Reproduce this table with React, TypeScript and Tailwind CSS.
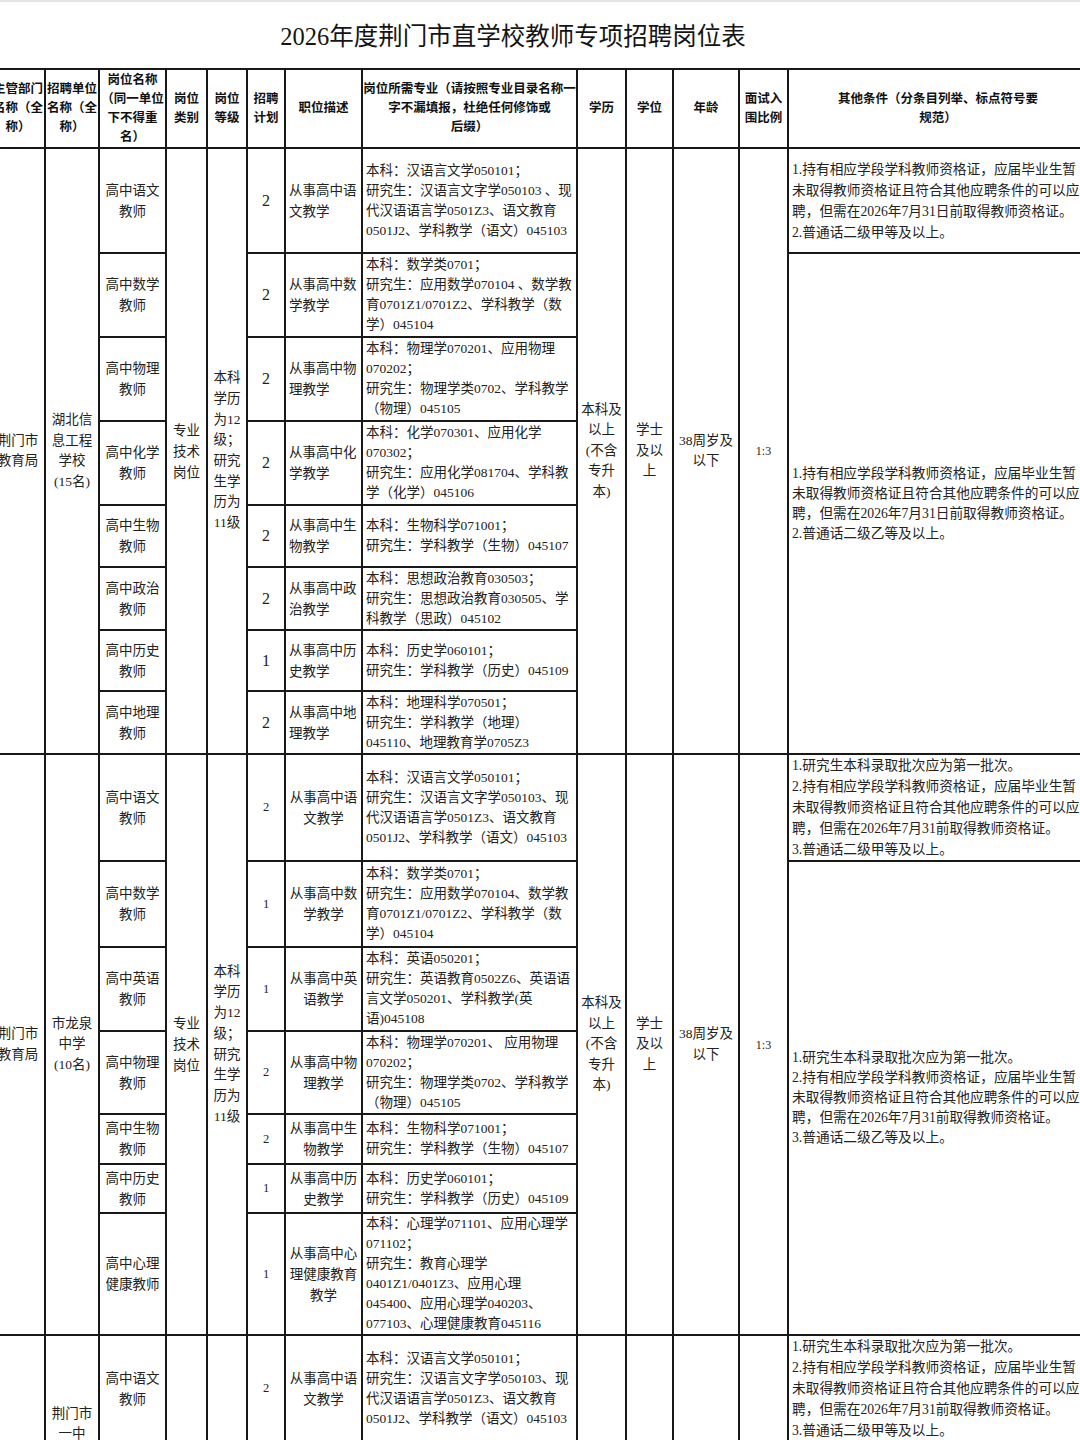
import type { ReactElement } from 'react';

type Row = {
  h: string;
  name: string[];
  plan: string;
  desc: string[];
  major: string[];
};

type Group = {
  dept: string[];
  unit: string[];
  kind: string[];
  grade: string[];
  edu: string[];
  degree: string[];
  age: string[];
  ratio: string;
  descCenter: boolean;
  planBig: boolean;
  otherFirst: string[];
  otherRest: string[];
  rows: Row[];
};

const OTHER_A = [
  '1.持有相应学段学科教师资格证，应届毕业生暂',
  '未取得教师资格证且符合其他应聘条件的可以应',
  '聘，但需在2026年7月31日前取得教师资格证。',
];

const OTHER_B = [
  '1.研究生本科录取批次应为第一批次。',
  '2.持有相应学段学科教师资格证，应届毕业生暂',
  '未取得教师资格证且符合其他应聘条件的可以应',
  '聘，但需在2026年7月31前取得教师资格证。',
];

const CHINESE = [
  '本科：汉语言文学050101；',
  '研究生：汉语言文字学050103 、现',
  '代汉语语言学0501Z3、语文教育',
  '0501J2、学科教学（语文）045103',
];

const GROUPS: Group[] = [
  {
    dept: ['荆门市', '教育局'],
    unit: ['湖北信', '息工程', '学校', '(15名)'],
    kind: ['专业', '技术', '岗位'],
    grade: ['本科', '学历', '为12', '级；', '研究', '生学', '历为', '11级'],
    edu: ['本科及', '以上', '(不含', '专升', '本)'],
    degree: ['学士', '及以', '上'],
    age: ['38周岁及', '以下'],
    ratio: '1:3',
    descCenter: false,
    planBig: true,
    otherFirst: [...OTHER_A, '2.普通话二级甲等及以上。'],
    otherRest: [...OTHER_A, '2.普通话二级乙等及以上。'],
    rows: [
      { h: 'h-[105px]', name: ['高中语文', '教师'], plan: '2', desc: ['从事高中语', '文教学'], major: CHINESE },
      {
        h: 'h-[84px]',
        name: ['高中数学', '教师'],
        plan: '2',
        desc: ['从事高中数', '学教学'],
        major: ['本科：数学类0701；', '研究生：应用数学070104 、数学教', '育0701Z1/0701Z2、学科教学（数', '学）045104'],
      },
      {
        h: 'h-[84px]',
        name: ['高中物理', '教师'],
        plan: '2',
        desc: ['从事高中物', '理教学'],
        major: ['本科：物理学070201、应用物理', '070202；', '研究生：物理学类0702、学科教学', '（物理）045105'],
      },
      {
        h: 'h-[84px]',
        name: ['高中化学', '教师'],
        plan: '2',
        desc: ['从事高中化', '学教学'],
        major: ['本科：化学070301、应用化学', '070302；', '研究生：应用化学081704、学科教', '学（化学）045106'],
      },
      {
        h: 'h-[62px]',
        name: ['高中生物', '教师'],
        plan: '2',
        desc: ['从事高中生', '物教学'],
        major: ['本科：生物科学071001；', '研究生：学科教学（生物）045107'],
      },
      {
        h: 'h-[63px]',
        name: ['高中政治', '教师'],
        plan: '2',
        desc: ['从事高中政', '治教学'],
        major: ['本科：思想政治教育030503；', '研究生：思想政治教育030505、学', '科教学（思政）045102'],
      },
      {
        h: 'h-[61px]',
        name: ['高中历史', '教师'],
        plan: '1',
        desc: ['从事高中历', '史教学'],
        major: ['本科：历史学060101；', '研究生：学科教学（历史）045109'],
      },
      {
        h: 'h-[63px]',
        name: ['高中地理', '教师'],
        plan: '2',
        desc: ['从事高中地', '理教学'],
        major: ['本科：地理科学070501；', '研究生：学科教学（地理）', '045110、地理教育学0705Z3'],
      },
    ],
  },
  {
    dept: ['荆门市', '教育局'],
    unit: ['市龙泉', '中学', '(10名)'],
    kind: ['专业', '技术', '岗位'],
    grade: ['本科', '学历', '为12', '级；', '研究', '生学', '历为', '11级'],
    edu: ['本科及', '以上', '(不含', '专升', '本)'],
    degree: ['学士', '及以', '上'],
    age: ['38周岁及', '以下'],
    ratio: '1:3',
    descCenter: true,
    planBig: false,
    otherFirst: [...OTHER_B, '3.普通话二级甲等及以上。'],
    otherRest: [...OTHER_B, '3.普通话二级乙等及以上。'],
    rows: [
      {
        h: 'h-[104px]',
        name: ['高中语文', '教师'],
        plan: '2',
        desc: ['从事高中语', '文教学'],
        major: ['本科：汉语言文学050101；', '研究生：汉语言文字学050103、现', '代汉语语言学0501Z3、语文教育', '0501J2、学科教学（语文）045103'],
      },
      {
        h: 'h-[86px]',
        name: ['高中数学', '教师'],
        plan: '1',
        desc: ['从事高中数', '学教学'],
        major: ['本科：数学类0701；', '研究生：应用数学070104、数学教', '育0701Z1/0701Z2、学科教学（数', '学）045104'],
      },
      {
        h: 'h-[84px]',
        name: ['高中英语', '教师'],
        plan: '1',
        desc: ['从事高中英', '语教学'],
        major: ['本科：英语050201；', '研究生：英语教育0502Z6、英语语', '言文学050201、学科教学(英', '语)045108'],
      },
      {
        h: 'h-[83px]',
        name: ['高中物理', '教师'],
        plan: '2',
        desc: ['从事高中物', '理教学'],
        major: ['本科：物理学070201、 应用物理', '070202；', '研究生：物理学类0702、学科教学', '（物理）045105'],
      },
      {
        h: 'h-[50px]',
        name: ['高中生物', '教师'],
        plan: '2',
        desc: ['从事高中生', '物教学'],
        major: ['本科：生物科学071001；', '研究生：学科教学（生物）045107'],
      },
      {
        h: 'h-[49px]',
        name: ['高中历史', '教师'],
        plan: '1',
        desc: ['从事高中历', '史教学'],
        major: ['本科：历史学060101；', '研究生：学科教学（历史）045109'],
      },
      {
        h: 'h-[122px]',
        name: ['高中心理', '健康教师'],
        plan: '1',
        desc: ['从事高中心', '理健康教育', '教学'],
        major: [
          '本科：心理学071101、应用心理学',
          '071102；',
          '研究生：教育心理学',
          '0401Z1/0401Z3、应用心理',
          '045400、应用心理学040203、',
          '077103、心理健康教育045116',
        ],
      },
    ],
  },
  {
    dept: [],
    unit: ['荆门市', '一中', '(8名)'],
    kind: [],
    grade: [],
    edu: [],
    degree: [],
    age: [],
    ratio: '',
    descCenter: true,
    planBig: false,
    otherFirst: [...OTHER_B, '3.普通话二级甲等及以上。'],
    otherRest: [],
    rows: [
      {
        h: 'h-[106px]',
        name: ['高中语文', '教师'],
        plan: '2',
        desc: ['从事高中语', '文教学'],
        major: ['本科：汉语言文学050101；', '研究生：汉语言文字学050103、现', '代汉语语言学0501Z3、语文教育', '0501J2、学科教学（语文）045103'],
      },
      { h: 'h-[92px]', name: [], plan: '', desc: [], major: [] },
    ],
  },
];

const CELL = 'border-2 border-[#181818] p-0 align-middle overflow-hidden';

function Lines({ lines }: { lines: string[] }): ReactElement {
  return (
    <>
      {lines.map((line, i) => (
        <div key={i} className="whitespace-nowrap">
          {line}
        </div>
      ))}
    </>
  );
}

function HeaderRow(): ReactElement {
  const heads: string[][] = [
    ['主管部门', '名称（全', '称）'],
    ['招聘单位', '名称（全', '称）'],
    ['岗位名称', '（同一单位', '下不得重', '名）'],
    ['岗位', '类别'],
    ['岗位', '等级'],
    ['招聘', '计划'],
    ['职位描述'],
    ['岗位所需专业（请按照专业目录名称一', '字不漏填报，杜绝任何修饰或', '后缀）'],
    ['学历'],
    ['学位'],
    ['年龄'],
    ['面试入', '围比例'],
    ['其他条件（分条目列举、标点符号要', '规范）'],
  ];
  return (
    <tr className="h-[79px]">
      {heads.map((h, i) => (
        <th key={i} className={`${CELL} text-center text-[12.5px] font-bold leading-[19px] text-[#111]`}>
          <Lines lines={h} />
        </th>
      ))}
    </tr>
  );
}

function GroupRows({ g }: { g: Group }): ReactElement {
  const span = g.rows.length;
  return (
    <>
      {g.rows.map((r, i) => (
        <tr key={i} className={r.h}>
          {i === 0 && (
            <>
              <td rowSpan={span} className={`${CELL} text-center leading-[20.5px]`}>
                <Lines lines={g.dept} />
              </td>
              <td rowSpan={span} className={`${CELL} text-center leading-[20.5px]`}>
                <Lines lines={g.unit} />
              </td>
            </>
          )}
          <td className={`${CELL} text-center leading-[21px]`}>
            <Lines lines={r.name} />
          </td>
          {i === 0 && (
            <>
              <td rowSpan={span} className={`${CELL} text-center leading-[21px]`}>
                <Lines lines={g.kind} />
              </td>
              <td rowSpan={span} className={`${CELL} text-center leading-[20.7px]`}>
                <Lines lines={g.grade} />
              </td>
            </>
          )}
          <td className={`${CELL} text-center ${g.planBig ? 'text-[16px]' : 'text-[12.5px]'}`}>{r.plan}</td>
          <td className={`${CELL} leading-[21px] ${g.descCenter ? 'text-center' : 'pl-[3px] text-left'}`}>
            <Lines lines={r.desc} />
          </td>
          <td className={`${CELL} pl-[3px] text-left ${r.major.length > 4 ? 'leading-[20px]' : 'leading-[20px]'}`}>
            <Lines lines={r.major} />
          </td>
          {i === 0 && (
            <>
              <td rowSpan={span} className={`${CELL} text-center leading-[20.5px]`}>
                <Lines lines={g.edu} />
              </td>
              <td rowSpan={span} className={`${CELL} text-center leading-[20.5px]`}>
                <Lines lines={g.degree} />
              </td>
              <td rowSpan={span} className={`${CELL} text-center leading-[20.5px]`}>
                <Lines lines={g.age} />
              </td>
              <td rowSpan={span} className={`${CELL} text-center text-[12px]`}>
                {g.ratio}
              </td>
              <td className={`${CELL} pl-[3px] text-left text-[13.7px] leading-[21px]`}>
                <Lines lines={g.otherFirst} />
              </td>
            </>
          )}
          {i === 1 && (
            <td rowSpan={span - 1} className={`${CELL} pl-[3px] text-left text-[13.7px] leading-[20px]`}>
              <Lines lines={g.otherRest} />
            </td>
          )}
        </tr>
      ))}
    </>
  );
}

export default function App(): ReactElement {
  return (
    <div className="relative h-[1440px] w-[1080px] overflow-hidden bg-white font-['Liberation_Serif','Noto_Sans_CJK_SC',serif] text-[13.5px] text-[#222]">
      <div className="h-[2px] bg-[#e4e4e4]" />
      <div className="flex h-[66px] items-center justify-center pr-[54px] pt-[4px] text-[24.5px] text-[#141414]">
        2026年度荆门市直学校教师专项招聘岗位表
      </div>
      <table className="-ml-[10px] w-[1097px] table-fixed border-collapse">
        <colgroup>
          <col className="w-[54px]" />
          <col className="w-[54px]" />
          <col className="w-[67px]" />
          <col className="w-[41px]" />
          <col className="w-[40px]" />
          <col className="w-[38px]" />
          <col className="w-[77px]" />
          <col className="w-[215px]" />
          <col className="w-[49px]" />
          <col className="w-[47px]" />
          <col className="w-[66px]" />
          <col className="w-[49px]" />
          <col className="w-[300px]" />
        </colgroup>
        <tbody>
          <HeaderRow />
          {GROUPS.map((g, i) => (
            <GroupRows key={i} g={g} />
          ))}
        </tbody>
      </table>
    </div>
  );
}
